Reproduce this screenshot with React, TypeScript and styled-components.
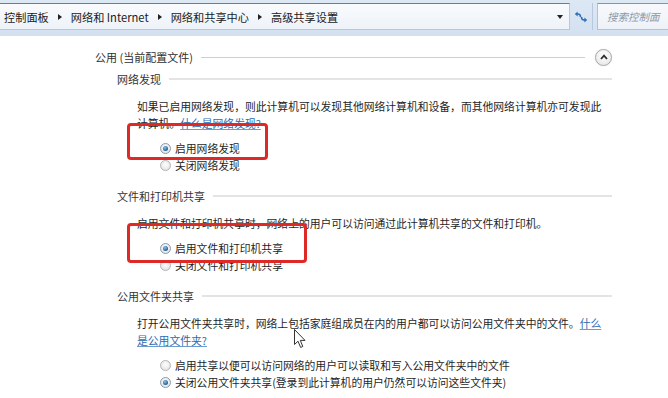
import React from "react";
import styled, { createGlobalStyle } from "styled-components";

const Global = createGlobalStyle`
  html, body { margin: 0; padding: 0; background: #fff; overflow: hidden; }
  body { font-family: "Noto Sans CJK SC", "Noto Sans", "Liberation Sans", sans-serif; }
`;

const Page = styled.div`
  width: 668px;
  height: 398px;
  position: relative;
  overflow: hidden;
  background: #fff;
  color: #2b2b2b;
  font-size: 11px;
`;

const TopBar = styled.div`
  height: 36px;
  box-sizing: border-box;
  padding: 3px 0 6px 0;
  display: flex;
  align-items: stretch;
  background: linear-gradient(#dde8f5, #d3e0f0);
`;

const AddressBox = styled.div`
  flex: 0 0 570px;
  box-sizing: border-box;
  display: flex;
  align-items: center;
  padding: 0 6px 0 4px;
  border-top: 1px solid #6d7d94;
  border-bottom: 1px solid #b8c8dc;
  border-right: 1px solid #b8c8dc;
  background: linear-gradient(#f9fbfd, #eef3f9);
`;

const Crumbs = styled.div`
  flex: 1;
  display: flex;
  align-items: center;
  gap: 6px;
  font-size: 11.2px;
  color: #1a1a1a;
  white-space: nowrap;
`;

const Arrow = styled.span`
  width: 0;
  height: 0;
  margin: 0 3px;
  border-top: 3.5px solid transparent;
  border-bottom: 3.5px solid transparent;
  border-left: 4px solid #222;
`;

const DropArrow = styled.span`
  width: 0;
  height: 0;
  border-left: 3.5px solid transparent;
  border-right: 3.5px solid transparent;
  border-top: 4px solid #222;
`;

const RefreshButton = styled.div`
  flex: 0 0 22px;
  display: flex;
  align-items: center;
  justify-content: center;
  border-right: 1px solid #b8c8dc;
`;

const SearchBox = styled.div`
  flex: 1;
  display: flex;
  align-items: center;
  box-sizing: border-box;
  padding-left: 9px;
  margin-left: 4px;
  border: 1px solid #b3c2d6;
  border-top-color: #8394ab;
  border-right: none;
  background: linear-gradient(#f7f9fc, #eef2f8);
  font-style: italic;
  font-size: 10.5px;
  color: #8d99a8;
  white-space: nowrap;
  overflow: hidden;
`;

const Content = styled.div`
  padding: 12px 56px 0 95px;
  display: flex;
  flex-direction: column;
`;

const ProfileHeader = styled.div`
  height: 18px;
  display: flex;
  align-items: center;
  gap: 8px;
`;

const ProfileTitle = styled.span`
  font-size: 11px;
  color: #2e2e2e;
  white-space: nowrap;
  line-height: 18px;
`;

const Rule = styled.div<{ $soft?: boolean }>`
  flex: 1;
  height: ${(p) => (p.$soft ? "2px" : "1px")};
  background: ${(p) => (p.$soft ? "#e4e4e4" : "#cfcfcf")};
`;

const CollapseButton = styled.div`
  width: 15px;
  height: 15px;
  margin-left: 2px;
  border-radius: 50%;
  border: 1px solid #a9a9a9;
  background: radial-gradient(circle at 50% 35%, #ffffff, #e3e3e3);
  display: flex;
  align-items: center;
  justify-content: center;
  box-shadow: 0 0 1px #ccc;
`;

const Section = styled.div<{ $first?: boolean }>`
  position: relative;
  margin: ${(p) => (p.$first ? "4.5px" : "14px")} 0 0 22px;
  display: flex;
  flex-direction: column;
`;

const SubHeader = styled.div`
  height: 17px;
  display: flex;
  align-items: center;
  gap: 8px;
  margin-bottom: 10px;
`;

const SubTitle = styled.span`
  font-size: 11px;
  color: #353535;
  white-space: nowrap;
  line-height: 17px;
`;

const Para = styled.p`
  margin: 0 0 8px 20px;
  font-size: 10.8px;
  line-height: 17px;
  color: #1f1f1f;
  white-space: nowrap;
`;

const Link = styled.a`
  color: #2a6bb2;
  text-decoration: underline;
  text-decoration-color: #6d9bd0;
`;

const RadioGroup = styled.div`
  margin-left: 43px;
  display: flex;
  flex-direction: column;
`;

const RadioRow = styled.label`
  height: 17px;
  display: flex;
  align-items: center;
  gap: 4px;
  font-size: 10.8px;
  color: #1f1f1f;
  white-space: nowrap;
`;

const RadioDot = styled.span<{ $on?: boolean }>`
  position: relative;
  width: 11px;
  height: 11px;
  box-sizing: border-box;
  border-radius: 50%;
  border: 1px solid ${(p) => (p.$on ? "#8a9aa8" : "#b4b4b4")};
  background: radial-gradient(circle at 50% 40%, #ffffff, #dcdcdc);
  flex: 0 0 auto;
  &::after {
    content: "";
    display: ${(p) => (p.$on ? "block" : "none")};
    position: absolute;
    left: 2px;
    top: 2px;
    width: 5px;
    height: 5px;
    border-radius: 50%;
    background: radial-gradient(circle at 40% 35%, #8cc2ea, #1f5f94 70%);
  }
`;

const Highlight = styled.div<{ $top: number; $left: number; $w: number; $h: number }>`
  position: absolute;
  top: ${(p) => p.$top}px;
  left: ${(p) => p.$left}px;
  width: ${(p) => p.$w}px;
  height: ${(p) => p.$h}px;
  box-sizing: border-box;
  border: 3px solid #de2a26;
  border-radius: 4px;
  pointer-events: none;
`;

const Cursor = styled.svg`
  position: absolute;
  left: 294px;
  top: 329px;
`;

const Radio = ({ on, label }: { on?: boolean; label: string }) => (
  <RadioRow>
    <RadioDot $on={on} />
    <span>{label}</span>
  </RadioRow>
);

export default function App() {
  return (
    <Page>
      <Global />
      <TopBar>
        <AddressBox>
          <Crumbs>
            <span>控制面板</span>
            <Arrow />
            <span>网络和 Internet</span>
            <Arrow />
            <span>网络和共享中心</span>
            <Arrow />
            <span>高级共享设置</span>
          </Crumbs>
          <DropArrow />
        </AddressBox>
        <RefreshButton>
          <svg width="14" height="12" viewBox="0 0 14 12">
            <path d="M6.5 6 Q6.5 3 4 3 H2.5" stroke="#2f6fb5" strokeWidth="1.6" fill="none" />
            <path d="M0.8 3 L3.6 0.6 L3.6 5.4 Z" fill="#2f6fb5" />
            <path d="M7.5 6 Q7.5 9 10 9 H11.5" stroke="#2f6fb5" strokeWidth="1.6" fill="none" />
            <path d="M13.2 9 L10.4 6.6 L10.4 11.4 Z" fill="#2f6fb5" />
          </svg>
        </RefreshButton>
        <SearchBox>搜索控制面</SearchBox>
      </TopBar>

      <Content>
        <ProfileHeader>
          <ProfileTitle>公用 (当前配置文件)</ProfileTitle>
          <Rule />
          <CollapseButton>
            <svg width="8" height="6" viewBox="0 0 8 6">
              <path d="M1 5 L4 1.6 L7 5" stroke="#2d2d2d" strokeWidth="1.8" fill="none" />
            </svg>
          </CollapseButton>
        </ProfileHeader>

        <Section $first>
          <SubHeader>
            <SubTitle>网络发现</SubTitle>
            <Rule $soft />
          </SubHeader>
          <Para>
            如果已启用网络发现，则此计算机可以发现其他网络计算机和设备，而其他网络计算机亦可发现此
            <br />
            计算机。<Link>什么是网络发现?</Link>
          </Para>
          <RadioGroup>
            <Radio on label="启用网络发现" />
            <Radio label="关闭网络发现" />
          </RadioGroup>
          <Highlight $top={52.5} $left={10} $w={141} $h={37} />
        </Section>

        <Section>
          <SubHeader>
            <SubTitle>文件和打印机共享</SubTitle>
            <Rule $soft />
          </SubHeader>
          <Para>启用文件和打印机共享时，网络上的用户可以访问通过此计算机共享的文件和打印机。</Para>
          <RadioGroup>
            <Radio on label="启用文件和打印机共享" />
            <Radio label="关闭文件和打印机共享" />
          </RadioGroup>
          <Highlight $top={35.5} $left={10} $w={180} $h={40} />
        </Section>

        <Section>
          <SubHeader>
            <SubTitle>公用文件夹共享</SubTitle>
            <Rule $soft />
          </SubHeader>
          <Para>
            打开公用文件夹共享时，网络上包括家庭组成员在内的用户都可以访问公用文件夹中的文件。<Link>什么</Link>
            <br />
            <Link>是公用文件夹?</Link>
          </Para>
          <RadioGroup>
            <Radio label="启用共享以便可以访问网络的用户可以读取和写入公用文件夹中的文件" />
            <Radio on label="关闭公用文件夹共享(登录到此计算机的用户仍然可以访问这些文件夹)" />
          </RadioGroup>
        </Section>
      </Content>

      <Cursor width="13" height="20" viewBox="0 0 13 20">
        <path
          d="M0.5 0.5 L0.5 15.5 L4 12.2 L6.6 18.4 L8.8 17.5 L6.3 11.4 L11 11.4 Z"
          fill="#fff"
          stroke="#333"
          strokeWidth="1"
          strokeLinejoin="round"
        />
      </Cursor>
    </Page>
  );
}
